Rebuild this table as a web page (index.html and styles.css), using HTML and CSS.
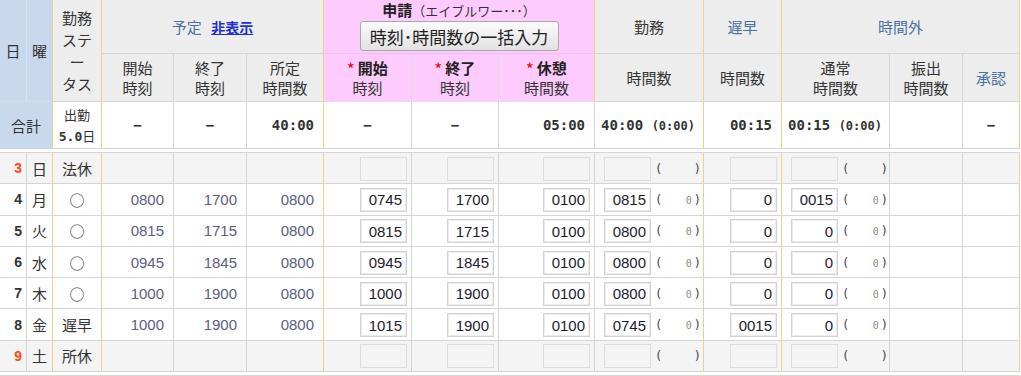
FILE: index.html
```html
<!DOCTYPE html>
<html lang="ja">
<head>
<meta charset="utf-8">
<title>勤務表</title>
<link rel="stylesheet" href="styles.css">
</head>
<body>
<table class="att">
  <colgroup>
    <col class="c1"><col class="c2"><col class="c3"><col class="c4"><col class="c5"><col class="c6"><col class="c7">
    <col class="c8"><col class="c9"><col class="c10"><col class="c11"><col class="c12"><col class="c13"><col class="c14">
  </colgroup>
  <thead>
    <tr class="h1">
      <th rowspan="2" class="blue bl">日</th>
      <th rowspan="2" class="blue ob">曜</th>
      <th rowspan="2" class="status ob">勤務<br>ステ<br>ー<br>タス</th>
      <th colspan="3" class="bt ob">予定 <a class="hide" href="#">非表示</a></th>
      <th colspan="3" class="pink ob req">
        <div class="req-ttl"><b>申請</b><span class="req-sub">（エイブルワー･･･）</span></div>
        <button class="bulk" type="button">時刻･時間数の一括入力</button>
      </th>
      <th class="ob">勤務</th>
      <th class="bt ob">遅早</th>
      <th colspan="3" class="bt ob">時間外</th>
    </tr>
    <tr class="h2">
      <th>開始<br>時刻</th>
      <th>終了<br>時刻</th>
      <th class="ob">所定<br>時間数</th>
      <th class="pink pl"><b><span class="ast">*</span> 開始</b><br>時刻</th>
      <th class="pink pl"><b><span class="ast">*</span> 終了</b><br>時刻</th>
      <th class="pink ob"><b><span class="ast">*</span> 休憩</b><br>時間数</th>
      <th class="ob">時間数</th>
      <th class="ob">時間数</th>
      <th>通常<br>時間数</th>
      <th>振出<br>時間数</th>
      <th class="bt ob">承認</th>
    </tr>
  </thead>
  <tbody>
    <tr class="tot">
      <td colspan="2" class="blue ob tot-l">合計</td>
      <td class="ob days"><span class="sm">出勤</span><br><span class="mono">5.0</span><span class="sm">日</span></td>
      <td class="dash">−</td>
      <td class="dash">−</td>
      <td class="ob mono r">40:00</td>
      <td class="dash">−</td>
      <td class="dash">−</td>
      <td class="mono r">05:00</td>
      <td class="ob mono l">40:00 <span class="msm">(0:00)</span></td>
      <td class="ob mono r">00:15</td>
      <td class="mono l">00:15 <span class="msm">(0:00)</span></td>
      <td></td>
      <td class="ob dash">−</td>
    </tr>
    <tr class="sep"><td colspan="14"></td></tr>
    <tr class="row off">
      <td class="d hol">3</td><td class="w ob">日</td><td class="st ob">法休</td>
      <td></td><td></td><td class="ob"></td>
      <td class="in"><input type="text" value=""></td>
      <td class="in"><input type="text" value=""></td>
      <td class="in"><input type="text" value=""></td>
      <td class="wk ob"><input type="text" value=""><span class="pr"><i>(</i><i>)</i></span></td>
      <td class="in ob"><input type="text" value=""></td>
      <td class="wk"><input type="text" value=""><span class="pr"><i>(</i><i>)</i></span></td>
      <td></td><td class="ob"></td>
    </tr>
    <tr class="row">
      <td class="d">4</td><td class="w ob">月</td><td class="st ob">○</td>
      <td class="n">0800</td><td class="n">1700</td><td class="n ob">0800</td>
      <td class="in"><input type="text" value="0745"></td>
      <td class="in"><input type="text" value="1700"></td>
      <td class="in"><input type="text" value="0100"></td>
      <td class="wk ob"><input type="text" value="0815"><span class="pr"><i>(</i><i><b>0</b>)</i></span></td>
      <td class="in ob"><input type="text" value="0"></td>
      <td class="wk"><input type="text" value="0015"><span class="pr"><i>(</i><i><b>0</b>)</i></span></td>
      <td></td><td class="ob"></td>
    </tr>
    <tr class="row">
      <td class="d">5</td><td class="w ob">火</td><td class="st ob">○</td>
      <td class="n">0815</td><td class="n">1715</td><td class="n ob">0800</td>
      <td class="in"><input type="text" value="0815"></td>
      <td class="in"><input type="text" value="1715"></td>
      <td class="in"><input type="text" value="0100"></td>
      <td class="wk ob"><input type="text" value="0800"><span class="pr"><i>(</i><i><b>0</b>)</i></span></td>
      <td class="in ob"><input type="text" value="0"></td>
      <td class="wk"><input type="text" value="0"><span class="pr"><i>(</i><i><b>0</b>)</i></span></td>
      <td></td><td class="ob"></td>
    </tr>
    <tr class="row">
      <td class="d">6</td><td class="w ob">水</td><td class="st ob">○</td>
      <td class="n">0945</td><td class="n">1845</td><td class="n ob">0800</td>
      <td class="in"><input type="text" value="0945"></td>
      <td class="in"><input type="text" value="1845"></td>
      <td class="in"><input type="text" value="0100"></td>
      <td class="wk ob"><input type="text" value="0800"><span class="pr"><i>(</i><i><b>0</b>)</i></span></td>
      <td class="in ob"><input type="text" value="0"></td>
      <td class="wk"><input type="text" value="0"><span class="pr"><i>(</i><i><b>0</b>)</i></span></td>
      <td></td><td class="ob"></td>
    </tr>
    <tr class="row">
      <td class="d">7</td><td class="w ob">木</td><td class="st ob">○</td>
      <td class="n">1000</td><td class="n">1900</td><td class="n ob">0800</td>
      <td class="in"><input type="text" value="1000"></td>
      <td class="in"><input type="text" value="1900"></td>
      <td class="in"><input type="text" value="0100"></td>
      <td class="wk ob"><input type="text" value="0800"><span class="pr"><i>(</i><i><b>0</b>)</i></span></td>
      <td class="in ob"><input type="text" value="0"></td>
      <td class="wk"><input type="text" value="0"><span class="pr"><i>(</i><i><b>0</b>)</i></span></td>
      <td></td><td class="ob"></td>
    </tr>
    <tr class="row">
      <td class="d">8</td><td class="w ob">金</td><td class="st ob">遅早</td>
      <td class="n">1000</td><td class="n">1900</td><td class="n ob">0800</td>
      <td class="in"><input type="text" value="1015"></td>
      <td class="in"><input type="text" value="1900"></td>
      <td class="in"><input type="text" value="0100"></td>
      <td class="wk ob"><input type="text" value="0745"><span class="pr"><i>(</i><i><b>0</b>)</i></span></td>
      <td class="in ob"><input type="text" value="0015"></td>
      <td class="wk"><input type="text" value="0"><span class="pr"><i>(</i><i><b>0</b>)</i></span></td>
      <td></td><td class="ob"></td>
    </tr>
    <tr class="row off">
      <td class="d hol">9</td><td class="w ob">土</td><td class="st ob">所休</td>
      <td></td><td></td><td class="ob"></td>
      <td class="in"><input type="text" value=""></td>
      <td class="in"><input type="text" value=""></td>
      <td class="in"><input type="text" value=""></td>
      <td class="wk ob"><input type="text" value=""><span class="pr"><i>(</i><i>)</i></span></td>
      <td class="in ob"><input type="text" value=""></td>
      <td class="wk"><input type="text" value=""><span class="pr"><i>(</i><i>)</i></span></td>
      <td></td><td class="ob"></td>
    </tr>
  </tbody>
</table>
<div class="foot"></div>
</body>
</html>
```

FILE: styles.css
```css
body {
  margin: 0;
  background: #fff;
  color: #333;
  font-family: "Noto Sans CJK JP", "Noto Sans", sans-serif;
  font-size: 15px;
}

.att {
  border-collapse: separate;
  border-spacing: 0;
  table-layout: fixed;
  width: 1020px;
}

.c1 { width: 27px; }
.c2 { width: 26px; }
.c3 { width: 49px; }
.c4 { width: 72px; }
.c5 { width: 73px; }
.c6 { width: 77px; }
.c7 { width: 88px; }
.c8 { width: 87px; }
.c9 { width: 96px; }
.c10 { width: 109px; }
.c11 { width: 78px; }
.c12 { width: 108px; }
.c13 { width: 73px; }
.c14 { width: 57px; }

.att th,
.att td {
  padding: 0;
  border-right: 1px solid #d6d6d6;
  border-bottom: 1px solid #d6d6d6;
  box-sizing: border-box;
  vertical-align: middle;
}

.att th {
  background: #ededed;
  font-weight: normal;
  font-size: 15px;
  line-height: 20px;
  text-align: center;
  color: #333;
}

.att .ob { border-right-color: #f5cf87; }

.h1 { height: 54px; }
.h2 { height: 48px; }

.att .blue { background: #c8d9ee; }
.att th.bl { border-right-color: #dbe3ec; }
.att th.blue { border-bottom-color: #d3dbe4; }

.status { line-height: 22px !important; }

.att .bt { color: #4a6fa3; }

.hide {
  color: #1f2fd6;
  font-weight: bold;
  font-size: 14px;
  margin-left: 6px;
}

.att th.pink { background: #fdcbfd; }
.att th.pl { border-right-color: #dcdcdc; }
.h1 th.pink { border-bottom-color: #f2c0f2; }
.h2 th.pink { border-bottom-color: #fdcbfd; }

.att th.req { vertical-align: top; }
.req-ttl {
  height: 20px;
  line-height: 20px;
  font-size: 15px;
}
.req-ttl b { font-weight: bold; color: #222; }
.req-sub { font-size: 13px; color: #333; }

.bulk {
  display: block;
  margin: 1px auto 0;
  width: 199px;
  height: 30px;
  padding: 0;
  border: 1px solid #a8a8a8;
  border-radius: 3px;
  background: linear-gradient(#fbfbfb, #e2e2e2);
  font-family: "Noto Sans CJK JP", sans-serif;
  font-size: 17px;
  color: #222;
}

.h2 b { font-weight: bold; color: #222; }
.ast { color: #e8141a; font-size: 14px; }

/* total row */
.tot { height: 47px; }
.tot td { background: #fff; text-align: center; }
.att td.tot-l { background: #c8d9ee; font-size: 15px; }
.days { line-height: 20px; }
.sm { font-size: 13px; }
.mono {
  font-family: "DejaVu Sans Mono", "Liberation Mono", monospace;
  font-weight: bold;
  font-size: 14px;
  color: #333;
}
.days .mono { font-size: 13px; }
.msm { font-size: 12px; }
.att td.r { text-align: right; padding-right: 9px; }
.att td.l { text-align: left; padding-left: 6px; }
.dash {
  font-family: "DejaVu Sans Mono", monospace;
  font-weight: bold;
  font-size: 14px;
}

.sep { height: 4px; }
.sep td { border-right: none; background: #fff; }

/* data rows */
.row { height: 31.3px; }
.row td { background: #fff; }
.row.off td { background: #f4f4f4; }

.d {
  text-align: right;
  padding-right: 4px !important;
  font-family: "Liberation Sans", sans-serif;
  font-weight: bold;
  font-size: 14px;
  color: #333;
}
.d.hol { color: #ff4a12; }
.w, .st { text-align: center; font-size: 15px; }
.st { font-size: 15px; }

.n {
  text-align: right;
  padding-right: 9px !important;
  font-family: "Liberation Sans", sans-serif;
  font-size: 15px;
  color: #5d5d80;
}

.row input {
  width: 47px;
  height: 24px;
  box-sizing: border-box;
  margin: 0;
  padding: 0 4px 0 0;
  border: 1px solid #d2d2d2;
  box-shadow: inset 0 0 0 1px #ececec;
  background: #fff;
  text-align: right;
  font-family: "Liberation Sans", sans-serif;
  font-size: 15px;
  color: #1c1c30;
  vertical-align: middle;
  outline: none;
}
.row.off input { background: #f4f4f4; border-color: #dcdcdc; box-shadow: none; }

.in { text-align: right; padding-right: 4px !important; }
.wk { text-align: left; padding-left: 9px !important; white-space: nowrap; }

.pr {
  display: inline-flex;
  justify-content: space-between;
  align-items: center;
  width: 46px;
  margin-left: 4px;
  vertical-align: middle;
  font-family: "DejaVu Sans Mono", monospace;
  font-size: 12px;
  color: #444;
}
.pr i { font-style: normal; }
.pr b {
  font-weight: normal;
  font-size: 10px;
  color: #978a7c;
  margin-right: 2px;
}

.foot {
  margin-top: 3px;
  border-top: 1px solid #d6d6d6;
  width: 1020px;
}
```
